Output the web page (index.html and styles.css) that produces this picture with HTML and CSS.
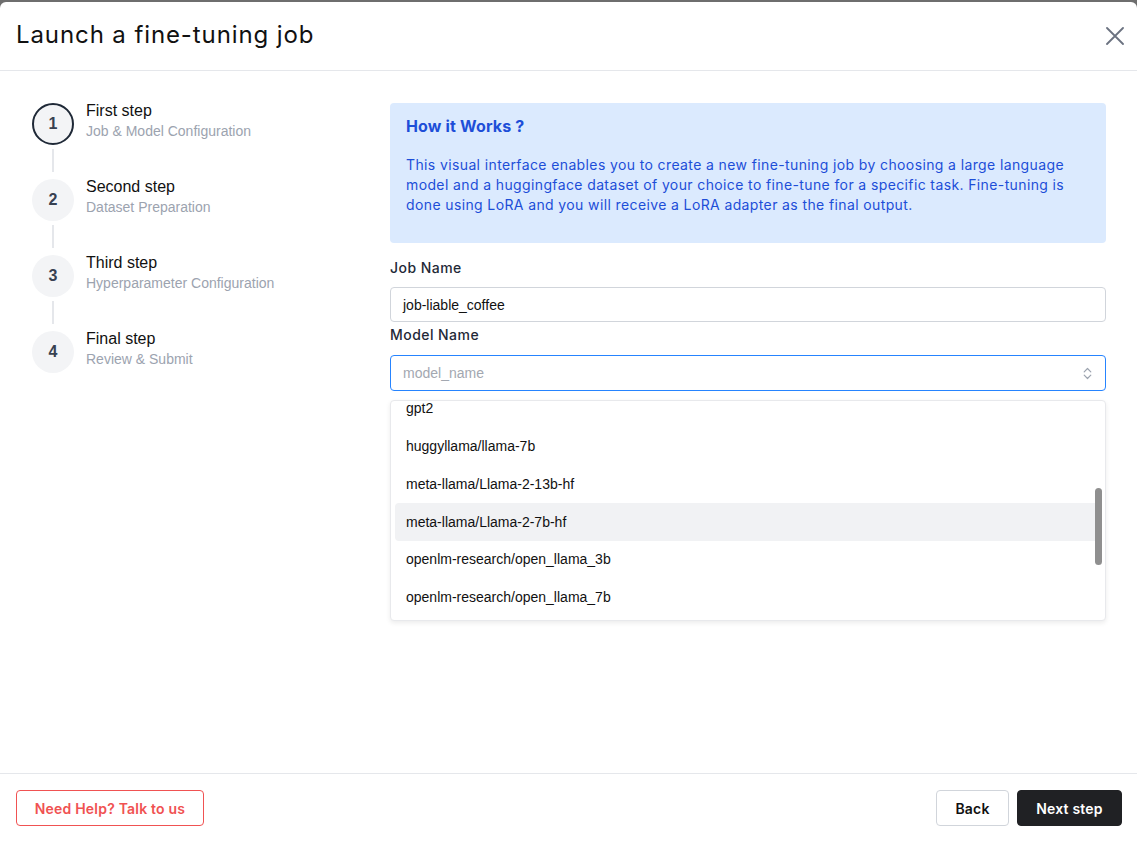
FILE: index.html
```html
<!DOCTYPE html>
<html lang="en">
<head>
<meta charset="utf-8">
<title>Launch a fine-tuning job</title>
<link rel="stylesheet" href="styles.css">
</head>
<body>
<div class="modal">
  <header class="modal-header">
    <h1 class="modal-title">Launch a fine-tuning job</h1>
    <button class="close-btn" aria-label="Close">
      <svg width="18" height="18" viewBox="0 0 18 18"><path d="M1 1 L17 17 M17 1 L1 17" stroke="#6b7280" stroke-width="1.8" stroke-linecap="round" fill="none"/></svg>
    </button>
  </header>

  <div class="modal-body">
    <ol class="stepper">
      <li class="step active">
        <div class="step-marker"><span class="step-circle">1</span><span class="step-line"></span></div>
        <div class="step-text"><div class="step-title">First step</div><div class="step-sub">Job &amp; Model Configuration</div></div>
      </li>
      <li class="step">
        <div class="step-marker"><span class="step-circle">2</span><span class="step-line"></span></div>
        <div class="step-text"><div class="step-title">Second step</div><div class="step-sub">Dataset Preparation</div></div>
      </li>
      <li class="step">
        <div class="step-marker"><span class="step-circle">3</span><span class="step-line"></span></div>
        <div class="step-text"><div class="step-title">Third step</div><div class="step-sub">Hyperparameter Configuration</div></div>
      </li>
      <li class="step">
        <div class="step-marker"><span class="step-circle">4</span></div>
        <div class="step-text"><div class="step-title">Final step</div><div class="step-sub">Review &amp; Submit</div></div>
      </li>
    </ol>

    <div class="panel">
      <div class="info-box">
        <h2 class="info-title">How it Works ?</h2>
        <p class="info-text">This visual interface enables you to create a new fine-tuning job by choosing a large language model and a huggingface dataset of your choice to fine-tune for a specific task. Fine-tuning is done using LoRA and you will receive a LoRA adapter as the final output.</p>
      </div>

      <label class="field-label label-job">Job Name</label>
      <div class="text-input">job-liable_coffee</div>

      <label class="field-label label-model">Model Name</label>
      <div class="select-input">
        <span class="placeholder">model_name</span>
        <svg class="select-icon" width="9" height="13" viewBox="0 0 9 13"><path d="M1.2 4.8 L4.5 1.5 L7.8 4.8 M1.2 8.2 L4.5 11.5 L7.8 8.2" stroke="#9ca3af" stroke-width="1.2" fill="none" stroke-linecap="round" stroke-linejoin="round"/></svg>
      </div>

      <div class="dropdown">
        <ul class="options">
          <li class="option">gpt2</li>
          <li class="option">huggyllama/llama-7b</li>
          <li class="option">meta-llama/Llama-2-13b-hf</li>
          <li class="option hovered">meta-llama/Llama-2-7b-hf</li>
          <li class="option">openlm-research/open_llama_3b</li>
          <li class="option">openlm-research/open_llama_7b</li>
        </ul>
        <span class="scroll-thumb"></span>
      </div>
    </div>
  </div>

  <footer class="modal-footer">
    <button class="btn btn-help">Need Help? Talk to us</button>
    <div class="footer-actions">
      <button class="btn btn-back">Back</button>
      <button class="btn btn-next">Next step</button>
    </div>
  </footer>
</div>
</body>
</html>
```

FILE: styles.css
```css
html, body {
  margin: 0;
  padding: 0;
}

body {
  background: #6e6e6e;
  font-family: "Liberation Sans", Arial, sans-serif;
  color: #111827;
  overflow: hidden;
}

.modal {
  margin-top: 2px;
  height: 839px;
  background: #ffffff;
  border-radius: 6px 6px 0 0;
  display: flex;
  flex-direction: column;
}

/* Header */
.modal-header {
  height: 69px;
  box-sizing: border-box;
  border-bottom: 1px solid #e5e7eb;
  display: flex;
  align-items: center;
  justify-content: space-between;
  padding: 0 10px 1px 16px;
}

.modal-title {
  margin: 0 0 2px;
  font-family: Inter, "Open Sans", sans-serif;
  font-size: 24px;
  font-weight: 400;
  letter-spacing: 0.9px;
  color: #111111;
}

.close-btn {
  width: 24px;
  height: 24px;
  border: 0;
  background: none;
  padding: 0;
  display: flex;
  align-items: center;
  justify-content: center;
}

/* Body */
.modal-body {
  flex: 1;
  display: flex;
  padding: 32px 31px 0 32px;
}

.stepper {
  width: 358px;
  flex-shrink: 0;
  list-style: none;
  margin: 0;
  padding: 0;
}

.step {
  display: flex;
  gap: 12px;
}

.step-marker {
  width: 42px;
  display: flex;
  flex-direction: column;
  align-items: center;
}

.step-circle {
  width: 42px;
  height: 42px;
  box-sizing: border-box;
  border-radius: 50%;
  background: #f3f4f6;
  display: flex;
  align-items: center;
  justify-content: center;
  font-size: 16px;
  font-weight: 700;
  color: #374151;
}

.step.active .step-circle {
  border: 2px solid #1f2937;
}

.step-line {
  width: 2px;
  height: 23px;
  background: #e5e7eb;
  margin: 4px 0 7px;
}

.step-text {
  margin-top: -2px;
}

.step-title {
  font-size: 16px;
  line-height: 20px;
  color: #111111;
}

.step-sub {
  font-size: 14px;
  line-height: 20px;
  color: #9ca3af;
}

/* Panel */
.panel {
  flex: 1;
  display: flex;
  flex-direction: column;
}

.info-box {
  height: 140px;
  box-sizing: border-box;
  background: #dbeafe;
  border-radius: 4px;
  padding: 11px 16px 0;
  color: #1d4ed8;
  font-family: Inter, "Open Sans", sans-serif;
}

.info-title {
  margin: 0;
  font-size: 16px;
  line-height: 24px;
  font-weight: 700;
  letter-spacing: 0.15px;
}

.info-text {
  margin: 17px 0 0;
  font-size: 14px;
  line-height: 20px;
  letter-spacing: 0.38px;
}

.field-label {
  display: block;
  font-family: Inter, "Open Sans", sans-serif;
  font-size: 14px;
  font-weight: 500;
  line-height: 20px;
  letter-spacing: 0.45px;
  color: #1f2937;
}

.label-job {
  margin-top: 15px;
}

.label-model {
  margin-top: 3px;
}

.text-input,
.select-input {
  box-sizing: border-box;
  display: flex;
  align-items: center;
  border-radius: 4px;
  padding: 0 12px;
  font-size: 14px;
}

.text-input {
  margin-top: 9px;
  height: 35px;
  border: 1px solid #d1d5db;
  color: #111111;
}

.select-input {
  margin-top: 10px;
  height: 36px;
  border: 1px solid #2684ff;
  justify-content: space-between;
  padding-right: 13px;
}

.placeholder {
  color: #a3a8b1;
}

/* Dropdown */
.dropdown {
  position: relative;
  margin-top: 9px;
  height: 221px;
  box-sizing: border-box;
  border: 1px solid #e8e9ec;
  border-radius: 4px;
  box-shadow: 0 2px 5px rgba(0, 0, 0, 0.08);
  padding: 0 4px;
  overflow: hidden;
  background: #ffffff;
}

.options {
  list-style: none;
  margin: -11.5px 0 0;
  padding: 0;
}

.option {
  height: 37.75px;
  display: flex;
  align-items: center;
  padding: 0 11px;
  border-radius: 4px;
  font-size: 14px;
  color: #111111;
}

.option.hovered {
  background: #f1f2f4;
}

.scroll-thumb {
  position: absolute;
  top: 87px;
  right: 3px;
  width: 7px;
  height: 77px;
  border-radius: 4px;
  background: #8f8f8f;
}

/* Footer */
.modal-footer {
  border-top: 1px solid #e5e7eb;
  display: flex;
  justify-content: space-between;
  align-items: flex-start;
  padding: 16px 15px 15px 16px;
}

.footer-actions {
  display: flex;
  gap: 8px;
}

.btn {
  height: 36px;
  box-sizing: border-box;
  border-radius: 4px;
  font-family: Inter, "Open Sans", sans-serif;
  font-size: 14px;
  font-weight: 600;
  letter-spacing: 0.2px;
  padding: 0;
  background: #ffffff;
  cursor: pointer;
}

.btn-help {
  width: 188px;
  border: 1px solid #f05252;
  color: #f05252;
}

.btn-back {
  width: 73px;
  border: 1px solid #d1d5db;
  color: #111111;
}

.btn-next {
  width: 105px;
  border: 1px solid #202124;
  background: #202124;
  color: #ffffff;
}
```
